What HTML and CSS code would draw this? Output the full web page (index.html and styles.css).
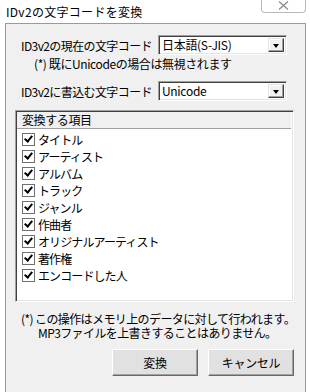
FILE: index.html
```html
<!DOCTYPE html>
<html lang="ja">
<head>
  <meta charset="UTF-8">
  <title>IDv2の文字コードを変換</title>
  <link rel="stylesheet" href="styles.css">
</head>
<body>
  <div class="titlebar">
    <span class="title">IDv2の文字コードを変換</span>
    <span class="close-btn">
      <svg width="11" height="9" viewBox="0 0 11 9"><path d="M1 0.5 L10 8.5 M10 0.5 L1 8.5" stroke="#8a8a8a" stroke-width="1.2" fill="none"/></svg>
    </span>
  </div>
  <div class="dialog">
    <div class="form-row">
      <span class="label">ID3v2の現在の文字コード</span>
      <div class="combo"><span class="combo-value">日本語(S-JIS)</span><span class="combo-arrow"></span></div>
    </div>
    <p class="hint">(*) 既にUnicodeの場合は無視されます</p>
    <div class="form-row second">
      <span class="label">ID3v2に書込む文字コード</span>
      <div class="combo"><span class="combo-value">Unicode</span><span class="combo-arrow"></span></div>
    </div>

    <div class="list">
      <div class="list-header">変換する項目</div>
      <ul class="items">
        <li><span class="check"></span>タイトル</li>
        <li><span class="check"></span>アーティスト</li>
        <li><span class="check"></span>アルバム</li>
        <li><span class="check"></span>トラック</li>
        <li><span class="check"></span>ジャンル</li>
        <li><span class="check"></span>作曲者</li>
        <li><span class="check"></span>オリジナルアーティスト</li>
        <li><span class="check"></span>著作権</li>
        <li><span class="check"></span>エンコードした人</li>
      </ul>
    </div>

    <div class="notes">
      <p class="note">(*) この操作はメモリ上のデータに対して行われます。</p>
      <p class="note indent">MP3ファイルを上書きすることはありません。</p>
    </div>

    <div class="buttons">
      <button class="btn">変換</button>
      <button class="btn">キャンセル</button>
    </div>
  </div>
</body>
</html>
```

FILE: styles.css
```css
/* Window */
body {
  margin: 0;
  background: #ffffff;
  font-family: "Noto Sans CJK JP", "Liberation Sans", sans-serif;
  font-size: 12px;
  color: #000000;
  width: 310px;
  height: 392px;
  overflow: hidden;
}

.titlebar {
  height: 23px;
  display: flex;
  justify-content: space-between;
  align-items: flex-start;
  padding: 0 4px 0 6px;
}

.title {
  margin-top: 4px;
  font-size: 12px;
  line-height: 16px;
  letter-spacing: 0.3px;
}

.close-btn {
  width: 45px;
  height: 13px;
  box-sizing: border-box;
  border: 1px solid #b9b9b9;
  border-top: none;
  border-radius: 0 0 4px 4px;
  display: flex;
  justify-content: center;
  align-items: flex-start;
  padding-top: 1px;
}

.dialog {
  margin: 0 4px 0 5px;
  height: 369px;
  background: #f0f0f0;
  border: 1px solid #9a9a9a;
  border-bottom: none;
  padding: 11px 0 0 15px;
  box-sizing: border-box;
}

/* Combo rows */
.form-row {
  display: flex;
  align-items: center;
  height: 20px;
}

.form-row.second {
  margin-top: 9px;
}

.label {
  width: 137px;
  letter-spacing: -0.6px;
  white-space: nowrap;
}

.combo {
  width: 129px;
  height: 20px;
  box-sizing: border-box;
  background: #ffffff;
  border-top: 1px solid #a0a0a0;
  border-left: 1px solid #a0a0a0;
  border-right: 1px solid #ffffff;
  border-bottom: 1px solid #ffffff;
  box-shadow: inset 1px 1px 0 #404040, inset -1px -1px 0 #e3e3e3;
  display: flex;
  align-items: center;
  padding: 0 2px 0 3px;
}

.combo-value {
  flex: 1;
  line-height: 14px;
  letter-spacing: -0.3px;
}

.combo-arrow {
  width: 16px;
  height: 14px;
  box-sizing: border-box;
  background: #f0f0f0;
  border-top: 1px solid #e3e3e3;
  border-left: 1px solid #e3e3e3;
  border-right: 1px solid #404040;
  border-bottom: 1px solid #404040;
  box-shadow: inset -1px -1px 0 #a0a0a0, inset 1px 1px 0 #ffffff;
  position: relative;
}

.combo-arrow::after {
  content: "";
  position: absolute;
  left: 4px;
  top: 5px;
  border-left: 3.5px solid transparent;
  border-right: 3.5px solid transparent;
  border-top: 4px solid #000000;
}

.hint {
  margin: 1px 0 0 13px;
  line-height: 16px;
  letter-spacing: -0.4px;
}

/* Item list */
.list {
  margin: 9px 0 0 -6px;
  width: 279px;
  height: 192px;
  box-sizing: border-box;
  background: #ffffff;
  border-top: 1px solid #a0a0a0;
  border-left: 1px solid #a0a0a0;
  border-right: 1px solid #ffffff;
  border-bottom: 1px solid #ffffff;
  box-shadow: inset 1px 1px 0 #404040, inset -1px -1px 0 #e3e3e3;
}

.list-header {
  height: 16px;
  line-height: 15px;
  padding-left: 5px;
  margin: 1px 2px 0 1px;
  background: #f0f0f0;
  border-bottom: 1px solid #a0a0a0;
  letter-spacing: -0.4px;
}

.items {
  list-style: none;
  margin: 0;
  padding: 2px 0 0 6px;
}

.items li {
  height: 17px;
  display: flex;
  align-items: center;
  letter-spacing: -0.9px;
}

.check {
  width: 11px;
  height: 11px;
  border: 1px solid #707070;
  margin-right: 3px;
  background: #ffffff;
  position: relative;
}

.check::after {
  content: "";
  position: absolute;
  left: 3px;
  top: 0px;
  width: 3px;
  height: 6px;
  border-right: 2px solid #000000;
  border-bottom: 2px solid #000000;
  transform: rotate(40deg);
}

/* Footer */
.notes {
  margin-top: 10px;
}

.note {
  margin: 0;
  height: 14px;
  line-height: 14px;
  letter-spacing: -0.6px;
  white-space: nowrap;
}

.note.indent {
  padding-left: 17px;
}

.buttons {
  display: flex;
  gap: 10px;
  margin: 9px 0 0 91px;
}

.btn {
  width: 86px;
  height: 27px;
  font-family: inherit;
  font-size: 12px;
  background: #e1e1e1;
  color: #000000;
  border-top: 1px solid #ffffff;
  border-left: 1px solid #ffffff;
  border-right: 1px solid #696969;
  border-bottom: 1px solid #696969;
  box-shadow: inset -1px -1px 0 #a0a0a0;
  padding: 0;
  letter-spacing: -0.3px;
}
```
